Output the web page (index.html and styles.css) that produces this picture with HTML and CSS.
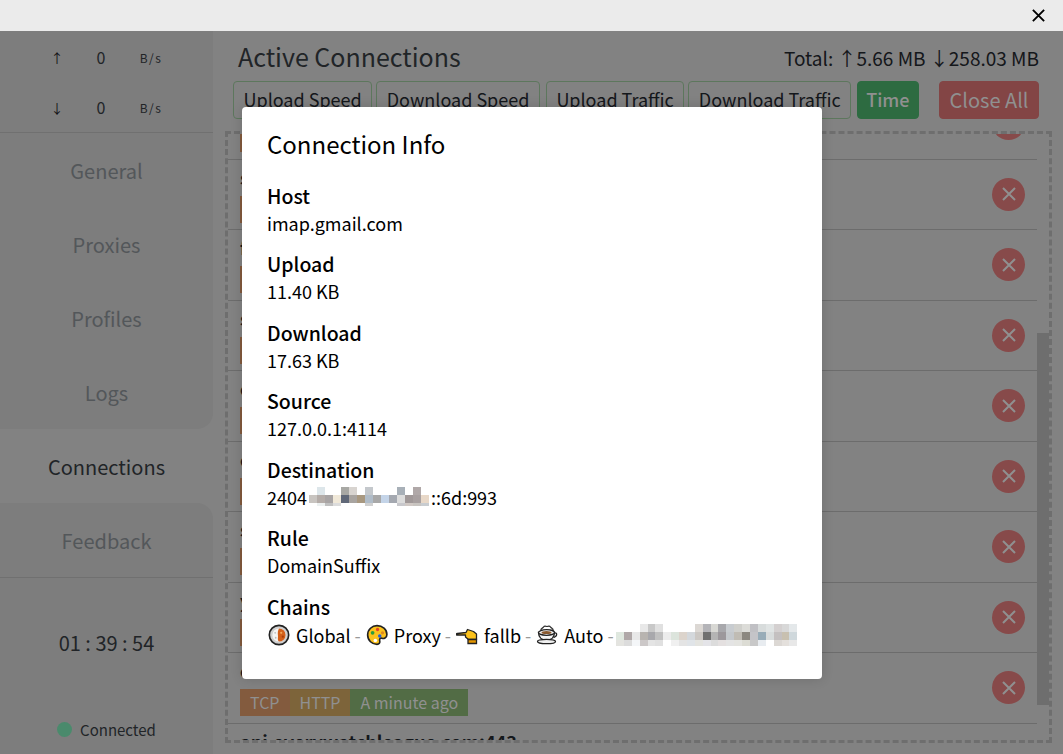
FILE: index.html
```html
<!DOCTYPE html>
<html lang="en">
<head>
    <meta charset="UTF-8">
    <meta name="viewport" content="width=device-width, initial-scale=1.0">
    <title>Connections</title>
    <link rel="stylesheet" href="styles.css">
</head>
<body>
    <svg class="defs" width="0" height="0">
        <symbol id="cross" viewBox="0 0 16 16">
            <path d="M2 2 14 14M14 2 2 14" fill="none" stroke="currentColor" stroke-width="2"/>
        </symbol>
    </svg>

    <header class="titlebar">
        <svg class="titlebar-close"><use href="#cross"/></svg>
    </header>

    <div class="app">
        <!-- Sidebar -->
        <aside class="sidebar">
            <div class="traffic">
                <div class="traffic-row"><span class="arrow">↑</span><span>0</span><span class="unit">B/s</span></div>
                <div class="traffic-row"><span class="arrow">↓</span><span>0</span><span class="unit">B/s</span></div>
            </div>
            <nav class="nav">
                <a class="nav-item">General</a>
                <a class="nav-item">Proxies</a>
                <a class="nav-item">Profiles</a>
                <a class="nav-item before-active">Logs</a>
                <a class="nav-item active">Connections</a>
                <a class="nav-item after-active">Feedback</a>
            </nav>
            <div class="clock">01 : 39 : 54</div>
            <div class="status"><span class="status-dot"></span>Connected</div>
        </aside>

        <!-- Connections list -->
        <main class="content">
            <div class="content-head">
                <h1>Active Connections</h1>
                <div class="total">Total: <span>↑5.66 MB</span> <span>↓258.03 MB</span></div>
            </div>
            <div class="toolbar">
                <button class="btn">Upload Speed</button>
                <button class="btn">Download Speed</button>
                <button class="btn btn-wide-gap">Upload Traffic</button>
                <button class="btn">Download Traffic</button>
                <button class="btn btn-time">Time</button>
                <button class="btn btn-close-all">Close All</button>
            </div>
            <div class="list">
                <div class="list-inner">
                    <div class="row"><div class="row-main"><div class="host">www.google.com:443</div><div class="tags"><span class="tag tag-net">TCP</span><span class="tag tag-type">HTTP</span><span class="tag tag-time">A minute ago</span></div></div><button class="kill"><svg><use href="#cross"/></svg></button></div>
                    <div class="row"><div class="row-main"><div class="host">ssl.gstatic.com:443</div><div class="tags"><span class="tag tag-net">TCP</span><span class="tag tag-type">HTTP</span><span class="tag tag-time">A minute ago</span></div></div><button class="kill"><svg><use href="#cross"/></svg></button></div>
                    <div class="row"><div class="row-main"><div class="host">fonts.gstatic.com:443</div><div class="tags"><span class="tag tag-net">TCP</span><span class="tag tag-type">HTTP</span><span class="tag tag-time">A minute ago</span></div></div><button class="kill"><svg><use href="#cross"/></svg></button></div>
                    <div class="row"><div class="row-main"><div class="host">stats.g.doubleclick.net:443</div><div class="tags"><span class="tag tag-net">TCP</span><span class="tag tag-type">HTTP</span><span class="tag tag-time">A minute ago</span></div></div><button class="kill"><svg><use href="#cross"/></svg></button></div>
                    <div class="row"><div class="row-main"><div class="host">clients4.google.com:443</div><div class="tags"><span class="tag tag-net">TCP</span><span class="tag tag-type">HTTP</span><span class="tag tag-time">A minute ago</span></div></div><button class="kill"><svg><use href="#cross"/></svg></button></div>
                    <div class="row"><div class="row-main"><div class="host">clients2.google.com:443</div><div class="tags"><span class="tag tag-net">TCP</span><span class="tag tag-type">HTTP</span><span class="tag tag-time">A minute ago</span></div></div><button class="kill"><svg><use href="#cross"/></svg></button></div>
                    <div class="row"><div class="row-main"><div class="host">safebrowsing.google.com:443</div><div class="tags"><span class="tag tag-net">TCP</span><span class="tag tag-type">HTTP</span><span class="tag tag-time">A minute ago</span></div></div><button class="kill"><svg><use href="#cross"/></svg></button></div>
                    <div class="row"><div class="row-main"><div class="host">youtube.com:443</div><div class="tags"><span class="tag tag-net">TCP</span><span class="tag tag-type">HTTP</span><span class="tag tag-time">A minute ago</span></div></div><button class="kill"><svg><use href="#cross"/></svg></button></div>
                    <div class="row"><div class="row-main"><div class="host">cdn.akamai.net:443</div><div class="tags"><span class="tag tag-net">TCP</span><span class="tag tag-type">HTTP</span><span class="tag tag-time">A minute ago</span></div></div><button class="kill"><svg><use href="#cross"/></svg></button></div>
                    <div class="row"><div class="row-main"><div class="host">api.everywatchleague.com:443</div></div></div>
                </div>
                <div class="scrollbar"></div>
            </div>
        </main>
    </div>

    <div class="overlay"></div>

    <!-- Connection info dialog -->
    <section class="modal">
        <h2>Connection Info</h2>
        <div class="field"><h3>Host</h3><p>imap.gmail.com</p></div>
        <div class="field"><h3>Upload</h3><p>11.40 KB</p></div>
        <div class="field"><h3>Download</h3><p>17.63 KB</p></div>
        <div class="field"><h3>Source</h3><p>127.0.0.1:4114</p></div>
        <div class="field">
            <h3>Destination</h3>
            <p class="dest">2404<svg class="mosaic" width="124" height="19" viewBox="0 0 124 19" shape-rendering="crispEdges">
                <rect x="10" y="0" width="8" height="8" fill="#dde6ea"/><rect x="34" y="0" width="8" height="8" fill="#a8a8a4"/><rect x="42" y="0" width="8" height="8" fill="#d8d4d0"/><rect x="58" y="0" width="8" height="8" fill="#c4c8cc"/><rect x="90" y="0" width="8" height="8" fill="#a8b0b8"/><rect x="106" y="0" width="8" height="8" fill="#b0a8a8"/>
                <rect x="2" y="8" width="8" height="8" fill="#c8c4c0"/><rect x="10" y="8" width="8" height="8" fill="#b4aca8"/><rect x="18" y="8" width="8" height="8" fill="#a8a4a4"/><rect x="26" y="8" width="8" height="8" fill="#f0e8d8"/><rect x="34" y="8" width="8" height="8" fill="#606878"/><rect x="42" y="8" width="8" height="8" fill="#a8a4a0"/><rect x="50" y="8" width="8" height="8" fill="#a89880"/><rect x="58" y="8" width="8" height="8" fill="#b0bcc8"/><rect x="66" y="8" width="8" height="8" fill="#a8a8a8"/><rect x="74" y="8" width="8" height="8" fill="#c4d4e8"/><rect x="82" y="8" width="8" height="8" fill="#a4a8b0"/><rect x="90" y="8" width="8" height="8" fill="#dcdcdc"/><rect x="98" y="8" width="8" height="8" fill="#a09898"/><rect x="106" y="8" width="8" height="8" fill="#a8a0a0"/><rect x="114" y="8" width="8" height="8" fill="#e8d8c8"/>
                <rect x="10" y="16" width="8" height="3" fill="#ecf0f0"/><rect x="18" y="16" width="8" height="3" fill="#c0c0c0"/><rect x="26" y="16" width="8" height="3" fill="#dcdcdc"/><rect x="58" y="16" width="8" height="3" fill="#d0d0d0"/><rect x="90" y="16" width="8" height="3" fill="#c8c8cc"/><rect x="98" y="16" width="8" height="3" fill="#d0c8c4"/><rect x="106" y="16" width="8" height="3" fill="#c8c4c0"/><rect x="114" y="16" width="8" height="3" fill="#c8ccd0"/>
            </svg>::6d:993</p>
        </div>
        <div class="field"><h3>Rule</h3><p>DomainSuffix</p></div>
        <div class="field">
            <h3>Chains</h3>
            <div class="chain">
                <svg class="emoji" viewBox="0 0 20 20">
                    <circle cx="10" cy="10" r="8.800" fill="#cfcfcf" stroke="#222" stroke-width="1.500"/>
                    <circle cx="10" cy="10" r="6" fill="#f4f4f4"/>
                    <path d="M10 4a6 6 0 0 1 0 12c-1.800-1.500-.6-3.500-1-6-.3-2 0-4.500 1-6z" fill="#d4601a"/>
                    <circle cx="12" cy="8" r="1" fill="#f2a65a"/><circle cx="13.500" cy="11.500" r="1" fill="#a83f0c"/><circle cx="6.500" cy="8" r=".8" fill="#bbb"/><circle cx="7" cy="12.500" r=".8" fill="#bbb"/>
                </svg>
                <span>Global</span><span class="sep">-</span>
                <svg class="emoji" viewBox="0 0 20 20">
                    <path d="M10 1.500c5 0 9 3.500 9 8 0 3.500-3 4-4.500 3.500-2-.5-2.500 1-2 2.500.4 1.500-.5 3-2.500 3-4.500 0-8.500-3.500-8.500-8.500s4-8.500 8.500-8.500z" fill="#fcc21b" stroke="#222" stroke-width="1.500"/>
                    <circle cx="6" cy="8" r="1.700" fill="#2e9e3e"/><circle cx="10.500" cy="5" r="1.500" fill="#e0452c"/><circle cx="15" cy="8" r="1.500" fill="#e08a1c"/><circle cx="12.500" cy="11" r="1.600" fill="#2a60d8"/><circle cx="8.500" cy="15" r="1.600" fill="#fff"/>
                </svg>
                <span>Proxy</span><span class="sep">-</span>
                <svg class="emoji" viewBox="0 0 22 20">
                    <path d="M1.500 8.500 10 7.500l1.500-3 6 2 3 2.500v5.500h-8l-3-2.500v-2h-8.500c-.8 0-.8-1.500 0-1.500z" fill="#fcc21b" stroke="#222" stroke-width="1.300" stroke-linejoin="round"/>
                    <path d="M12 14.500h8.500v4h-8.500z" fill="#e59600" stroke="#222" stroke-width="1.300"/>
                </svg>
                <span>fallb</span><span class="sep">-</span>
                <svg class="emoji" viewBox="0 0 22 20">
                    <path d="M5 6c-1-3 2-2.500 2.500-4 1-1.500 2.500-.5 3.500-.5s2.500-1 3.500.5c.5 1.500 3.500 1 2.500 4z" fill="#fff" stroke="#333" stroke-width="1.200"/>
                    <path d="M2.500 7.500c0 4.500 3 7.500 8 7.500s8-3 8-7.500z" fill="#f6f6f6" stroke="#222" stroke-width="1.300"/>
                    <ellipse cx="10.500" cy="7.500" rx="8" ry="2.800" fill="#f6f6f6" stroke="#222" stroke-width="1.300"/>
                    <ellipse cx="10.500" cy="7.500" rx="5" ry="1.600" fill="#8a5a30"/>
                    <path d="M18.500 8c3-.5 3 3.500-1 4.500" fill="none" stroke="#222" stroke-width="1.300"/>
                    <ellipse cx="10.500" cy="16.500" rx="9" ry="2.200" fill="#f0f0f0" stroke="#222" stroke-width="1.300"/>
                </svg>
                <span>Auto</span><span class="sep">-</span>
                <svg class="mosaic" width="184" height="22" viewBox="0 0 184 22" shape-rendering="crispEdges">
                    <rect x="24" y="0" width="8" height="8" fill="#e8e8e8"/><rect x="32" y="0" width="8" height="8" fill="#c8c8c8"/><rect x="40" y="0" width="8" height="8" fill="#e0e0e0"/><rect x="80" y="0" width="8" height="8" fill="#dcd8d4"/><rect x="88" y="0" width="8" height="8" fill="#b4b4b8"/><rect x="96" y="0" width="8" height="8" fill="#d8d8d4"/><rect x="104" y="0" width="8" height="8" fill="#a8a8ac"/><rect x="112" y="0" width="8" height="8" fill="#c8ccd0"/><rect x="120" y="0" width="8" height="8" fill="#d0d0cc"/><rect x="128" y="0" width="8" height="8" fill="#dcdcd8"/><rect x="136" y="0" width="8" height="8" fill="#c0c0c4"/><rect x="144" y="0" width="8" height="8" fill="#d8dcdc"/><rect x="152" y="0" width="8" height="8" fill="#e0e4e4"/><rect x="160" y="0" width="8" height="8" fill="#d4d0d0"/><rect x="168" y="0" width="8" height="8" fill="#d8d8d8"/><rect x="176" y="0" width="8" height="8" fill="#e4e8ea"/>
                    <rect x="0" y="8" width="8" height="8" fill="#dfe8df"/><rect x="8" y="8" width="8" height="8" fill="#b0a8a8"/><rect x="16" y="8" width="8" height="8" fill="#e8e8e8"/><rect x="24" y="8" width="8" height="8" fill="#b8b4b0"/><rect x="32" y="8" width="8" height="8" fill="#a8a8ac"/><rect x="40" y="8" width="8" height="8" fill="#c0c0c0"/><rect x="48" y="8" width="8" height="8" fill="#ececec"/><rect x="56" y="8" width="8" height="8" fill="#dce4dc"/><rect x="64" y="8" width="8" height="8" fill="#dcd4cc"/><rect x="72" y="8" width="8" height="8" fill="#d4d8dc"/><rect x="80" y="8" width="8" height="8" fill="#ccc8c4"/><rect x="88" y="8" width="8" height="8" fill="#707070"/><rect x="96" y="8" width="8" height="8" fill="#b4b4b4"/><rect x="104" y="8" width="8" height="8" fill="#9c989c"/><rect x="112" y="8" width="8" height="8" fill="#c4c8cc"/><rect x="120" y="8" width="8" height="8" fill="#c0bcb4"/><rect x="128" y="8" width="8" height="8" fill="#8c8880"/><rect x="136" y="8" width="8" height="8" fill="#c4c4c8"/><rect x="144" y="8" width="8" height="8" fill="#98acb8"/><rect x="152" y="8" width="8" height="8" fill="#d8dcdc"/><rect x="160" y="8" width="8" height="8" fill="#c4c0c0"/><rect x="168" y="8" width="8" height="8" fill="#c8c0b0"/><rect x="176" y="8" width="8" height="8" fill="#cfd8dc"/>
                    <rect x="0" y="16" width="8" height="6" fill="#e4e4e0"/><rect x="8" y="16" width="8" height="6" fill="#dcdcdc"/><rect x="16" y="16" width="8" height="6" fill="#f4f6f8"/><rect x="24" y="16" width="8" height="6" fill="#ccc8c8"/><rect x="32" y="16" width="8" height="6" fill="#e4e4e4"/><rect x="40" y="16" width="8" height="6" fill="#e0e0e0"/><rect x="56" y="16" width="8" height="6" fill="#f0f0f0"/><rect x="64" y="16" width="8" height="6" fill="#e4e4e4"/><rect x="72" y="16" width="8" height="6" fill="#e0e4e8"/><rect x="80" y="16" width="8" height="6" fill="#e4e4e0"/><rect x="88" y="16" width="8" height="6" fill="#e4e4e8"/><rect x="96" y="16" width="8" height="6" fill="#dcdcdc"/><rect x="104" y="16" width="8" height="6" fill="#e4e0e0"/><rect x="112" y="16" width="8" height="6" fill="#e4e4e4"/><rect x="120" y="16" width="8" height="6" fill="#e4e4e0"/><rect x="128" y="16" width="8" height="6" fill="#dcdcd4"/><rect x="136" y="16" width="8" height="6" fill="#c8c8c8"/><rect x="144" y="16" width="8" height="6" fill="#e8ecf0"/><rect x="160" y="16" width="8" height="6" fill="#dcd8d4"/><rect x="168" y="16" width="8" height="6" fill="#e4e0dc"/><rect x="176" y="16" width="8" height="6" fill="#e8e8e8"/>
                </svg>
            </div>
        </div>
    </section>
</body>
</html>
```

FILE: styles.css
```css
* {
    box-sizing: border-box;
}
html, body {
    height: 100%;
}
body {
    margin: 0;
    overflow: hidden;
    font-family: "Noto Sans CJK SC", "Noto Sans", sans-serif;
    color: #3a3f44;
    background-color: #c8c8c8;
}
.defs {
    position: absolute;
}
h1, h2, h3, p {
    margin: 0;
    font-weight: 400;
}

/* title bar */
.titlebar {
    height: 31px;
    padding-right: 17px;
    display: flex;
    justify-content: flex-end;
    align-items: center;
    background-color: #ebebeb;
    color: #000;
}
.titlebar-close {
    width: 15px;
    height: 15px;
}

.app {
    height: 723px;
    display: flex;
}

/* sidebar */
.sidebar {
    width: 213px;
    flex-shrink: 0;
    display: flex;
    flex-direction: column;
    background-color: #c0c0c0;
}
.traffic {
    height: 101px;
    padding-left: 35px;
    padding-top: 1px;
}
.traffic-row {
    height: 50px;
    display: grid;
    grid-template-columns: 44px 44px 56px;
    align-items: center;
    justify-items: center;
    font-size: 16px;
    color: #33383d;
}
.arrow {
    font-size: 13px;
    color: #1a1a24;
}
.unit {
    font-size: 12px;
    letter-spacing: 1.5px;
}
.nav {
    display: flex;
    flex-direction: column;
    background-color: #c8c8c8;
    border-top: 1px solid #acacac;
    border-bottom: 1px solid #acacac;
}
.nav-item {
    height: 74px;
    display: flex;
    align-items: center;
    justify-content: center;
    font-size: 20px;
    color: #80868b;
    background-color: #c0c0c0;
}
.nav-item.active {
    color: #33383d;
    background-color: #c8c8c8;
}
.before-active {
    border-bottom-right-radius: 16px;
}
.after-active {
    border-top-right-radius: 16px;
}
.clock {
    margin-top: 50px;
    text-align: center;
    font-size: 20px;
    color: #33383d;
}
.status {
    margin-top: 62px;
    display: flex;
    align-items: center;
    justify-content: center;
    gap: 8px;
    font-size: 15px;
    color: #33383d;
}
.status-dot {
    width: 15px;
    height: 15px;
    border-radius: 50%;
    background-color: #72d4a6;
}

/* connections */
.content {
    flex: 1;
    min-width: 0;
    padding: 5px 11px 11px 12px;
    display: flex;
    flex-direction: column;
}
.content-head {
    height: 40px;
    margin-bottom: 5px;
    padding: 0 13px;
    display: flex;
    justify-content: space-between;
    align-items: center;
}
h1 {
    font-size: 25px;
    color: #33383d;
}
.total {
    margin-top: 3px;
    font-size: 19px;
    color: #1f252b;
}
.toolbar {
    margin: 0 13px 0 8px;
    display: flex;
    gap: 4px;
}
.btn {
    height: 38px;
    padding: 0 9.5px 2px;
    font-family: inherit;
    font-size: 18px;
    color: #1f252b;
    background-color: transparent;
    border: 1px solid #8fb78f;
    border-radius: 4px;
}
.btn-wide-gap {
    margin-left: 2px;
}
.btn-time {
    margin-left: 2px;
    padding: 0 8px 2px;
    font-weight: 500;
    color: #ddd;
    background-color: #45a564;
    border-color: #45a564;
}
.btn-close-all {
    margin-left: auto;
    font-size: 20px;
    color: #ddd;
    background-color: #c96a6a;
    border-color: #c96a6a;
}
.list {
    position: relative;
    margin-top: 12px;
    height: 612px;
    border: 3px dashed #a9a9a9;
    overflow: hidden;
}
.list-inner {
    margin-top: -45px;
    margin-right: 12px;
}
.row {
    height: 70.5px;
    padding: 0 12px;
    display: flex;
    justify-content: space-between;
    align-items: center;
    border-bottom: 1px solid #a6a6a6;
}
.row-main {
    align-self: flex-start;
    padding-top: 5px;
}
.host {
    height: 31px;
    font-size: 18px;
    font-weight: 700;
    line-height: 24px;
    white-space: nowrap;
    color: #1f252b;
}
.tags {
    display: flex;
    height: 27px;
}
.tag {
    padding: 0 10px;
    font-size: 16px;
    line-height: 27px;
    color: #ddd;
}
.tag-net {
    background-color: #c98c60;
}
.tag-type {
    background-color: #c09a5a;
}
.tag-time {
    background-color: #7fa66a;
}
.kill {
    width: 33px;
    height: 33px;
    padding: 0;
    display: flex;
    align-items: center;
    justify-content: center;
    color: #ddd;
    background-color: #d07272;
    border: 0;
    border-radius: 50%;
}
.kill svg {
    width: 16px;
    height: 16px;
}
.scrollbar {
    position: absolute;
    top: 199px;
    right: 0;
    width: 12px;
    height: 372px;
    background-color: #a9a9a9;
}

/* dialog */
.overlay {
    position: absolute;
    top: 31px;
    left: 0;
    right: 0;
    bottom: 0;
    background-color: rgba(0, 0, 0, 0.35);
}
.modal {
    position: absolute;
    top: 107px;
    left: 242px;
    width: 580px;
    height: 572px;
    padding: 20px 25px;
    color: #000;
    background-color: #fff;
    border-radius: 4px;
    box-shadow: 0 0 12px rgba(0, 0, 0, 0.15);
}
h2 {
    font-size: 24px;
    line-height: 34px;
    margin-bottom: 20.5px;
}
.field {
    height: 68.5px;
}
h3 {
    font-size: 19.5px;
    font-weight: 500;
    line-height: 28px;
}
.field p {
    font-size: 18px;
    line-height: 26px;
}
.dest {
    display: flex;
    align-items: center;
}
.chain {
    margin-top: 1px;
    display: flex;
    align-items: center;
    height: 26px;
    font-size: 18px;
    white-space: nowrap;
}
.sep {
    margin: 0 5px 0 4px;
    color: #999;
}
.emoji {
    width: 22px;
    height: 22px;
    margin-right: 6px;
    flex-shrink: 0;
}
.emoji:first-child {
    margin-left: 1px;
}
.chain .mosaic {
    margin-left: -3px;
}
```
